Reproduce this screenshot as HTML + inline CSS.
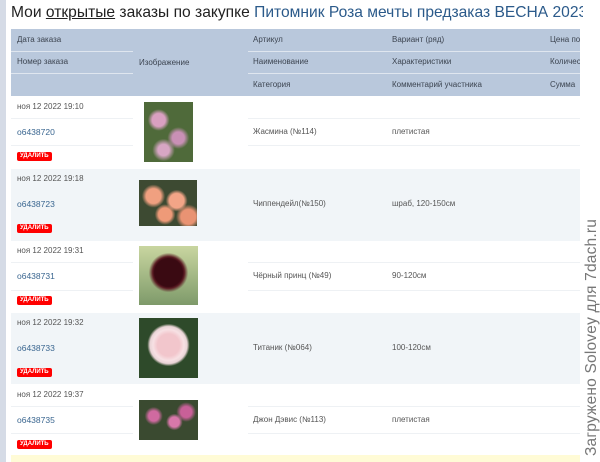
<!DOCTYPE html>
<html><head><meta charset="utf-8"><style>
*{margin:0;padding:0;box-sizing:border-box}
body{width:600px;height:462px;overflow:hidden;background:#fff;font-family:"Liberation Sans",Arial,sans-serif;position:relative}
.a{position:absolute;white-space:nowrap}
.strip{left:0;top:0;width:6px;height:462px;background:#d5dbe6}
h1{position:absolute;left:11px;top:4px;width:572px;overflow:hidden;font-weight:normal;font-size:15.6px;color:#222;white-space:nowrap}
h1 u{color:#222}
h1 span{color:#2b5a8a}
.hd{left:11px;top:29px;width:569px;height:67px;background:#b9c8dc}
.hl{position:absolute;height:1px;background:#dfe6ef}
.h{font-size:8px;color:#3c4450}
.row{left:11px;width:569px}
.t{font-size:8px;color:#555}
.n{font-size:8.5px;color:#3a6690}
.del{position:absolute;background:#f00;color:#fff;font-size:6px;font-weight:bold;border-radius:2px;padding:1px 3px;height:9px;line-height:7px}
.sep{position:absolute;height:1px;background:#eef1f4}
.img{position:absolute}
.wm{left:583px;top:456px;transform-origin:0 0;transform:rotate(-90deg);font-size:15.5px;color:#777;letter-spacing:0.2px}
</style></head><body>
<div class="a strip"></div>
<h1>Мои <u>открытые</u> заказы по закупке <span>Питомник Роза мечты предзаказ ВЕСНА 2023</span></h1>
<div class="a hd"></div>
<div class="hl" style="left:11px;top:51px;width:122px"></div>
<div class="hl" style="left:11px;top:73px;width:122px"></div>
<div class="hl" style="left:248px;top:51px;width:332px"></div>
<div class="hl" style="left:248px;top:73px;width:332px"></div>
<div class="a h" style="left:17px;top:35px">Дата заказа</div>
<div class="a h" style="left:17px;top:57px">Номер заказа</div>
<div class="a h" style="left:139px;top:58px">Изображение</div>
<div class="a h" style="left:253px;top:35px">Артикул</div>
<div class="a h" style="left:253px;top:57px">Наименование</div>
<div class="a h" style="left:253px;top:80px">Категория</div>
<div class="a h" style="left:392px;top:35px">Вариант (ряд)</div>
<div class="a h" style="left:392px;top:57px">Характеристики</div>
<div class="a h" style="left:392px;top:80px">Комментарий участника</div>
<div class="a h" style="left:550px;top:35px;width:30px;overflow:hidden">Цена по</div>
<div class="a h" style="left:550px;top:57px;width:30px;overflow:hidden">Количес</div>
<div class="a h" style="left:550px;top:80px">Сумма</div>

<div class="a row" style="top:169px;height:72px;background:#f1f5f8"></div>
<div class="a row" style="top:313px;height:71px;background:#f1f5f8"></div>
<div class="a" style="left:11px;top:455px;width:569px;height:7px;background:#fffbd6"></div>

<div class="sep" style="left:11px;top:118px;width:122px"></div><div class="sep" style="left:11px;top:145px;width:122px"></div>
<div class="sep" style="left:248px;top:118px;width:332px"></div><div class="sep" style="left:248px;top:145px;width:332px"></div>
<div class="sep" style="left:11px;top:262px;width:122px"></div><div class="sep" style="left:11px;top:290px;width:122px"></div>
<div class="sep" style="left:248px;top:262px;width:332px"></div><div class="sep" style="left:248px;top:290px;width:332px"></div>
<div class="sep" style="left:11px;top:406px;width:122px"></div><div class="sep" style="left:11px;top:433px;width:122px"></div>
<div class="sep" style="left:248px;top:406px;width:332px"></div><div class="sep" style="left:248px;top:433px;width:332px"></div>

<div class="a t" style="left:17px;top:102px">ноя 12 2022 19:10</div>
<div class="a n" style="left:17px;top:127px">о6438720</div>
<div class="del" style="left:17px;top:152px">УДАЛИТЬ</div>
<div class="a t" style="left:253px;top:127px">Жасмина (№114)</div>
<div class="a t" style="left:392px;top:127px">плетистая</div>

<div class="a t" style="left:17px;top:174px">ноя 12 2022 19:18</div>
<div class="a n" style="left:17px;top:199px">о6438723</div>
<div class="del" style="left:17px;top:224px">УДАЛИТЬ</div>
<div class="a t" style="left:253px;top:199px">Чиппендейл(№150)</div>
<div class="a t" style="left:392px;top:199px">шраб, 120-150см</div>

<div class="a t" style="left:17px;top:246px">ноя 12 2022 19:31</div>
<div class="a n" style="left:17px;top:271px">о6438731</div>
<div class="del" style="left:17px;top:296px">УДАЛИТЬ</div>
<div class="a t" style="left:253px;top:271px">Чёрный принц (№49)</div>
<div class="a t" style="left:392px;top:271px">90-120см</div>

<div class="a t" style="left:17px;top:318px">ноя 12 2022 19:32</div>
<div class="a n" style="left:17px;top:343px">о6438733</div>
<div class="del" style="left:17px;top:368px">УДАЛИТЬ</div>
<div class="a t" style="left:253px;top:343px">Титаник (№064)</div>
<div class="a t" style="left:392px;top:343px">100-120см</div>

<div class="a t" style="left:17px;top:390px">ноя 12 2022 19:37</div>
<div class="a n" style="left:17px;top:415px">о6438735</div>
<div class="del" style="left:17px;top:440px">УДАЛИТЬ</div>
<div class="a t" style="left:253px;top:415px">Джон Дэвис (№113)</div>
<div class="a t" style="left:392px;top:415px">плетистая</div>

<div class="img" style="left:144px;top:102px;width:49px;height:60px;background:radial-gradient(circle at 30% 30%,#d9a0c0 0 12%,transparent 20%),radial-gradient(circle at 70% 60%,#c990b5 0 12%,transparent 22%),radial-gradient(circle at 40% 80%,#d7a6c4 0 10%,transparent 20%),#4f6a3a"></div>
<div class="img" style="left:139px;top:180px;width:58px;height:46px;background:radial-gradient(circle at 25% 35%,#f0a080 0 14%,transparent 22%),radial-gradient(circle at 65% 45%,#f3a587 0 16%,transparent 24%),radial-gradient(circle at 45% 75%,#ee9a78 0 14%,transparent 22%),radial-gradient(circle at 85% 80%,#e99373 0 12%,transparent 20%),#3d4a32"></div>
<div class="img" style="left:139px;top:246px;width:59px;height:59px;background:radial-gradient(circle at 50% 45%,#3a0a12 0 32%,#5a1a22 36%,transparent 45%),linear-gradient(#c9d6a0,#7e9a6a)"></div>
<div class="img" style="left:139px;top:318px;width:59px;height:60px;background:radial-gradient(circle at 50% 45%,#f2c6cc 0 25%,#f7e1e4 35%,#e9d4d6 42%,transparent 48%),#2e4a2a"></div>
<div class="img" style="left:139px;top:400px;width:59px;height:40px;background:radial-gradient(circle at 25% 40%,#d06aa0 0 10%,transparent 18%),radial-gradient(circle at 60% 55%,#d878aa 0 12%,transparent 20%),radial-gradient(circle at 80% 30%,#c86098 0 10%,transparent 18%),#3a4a30"></div>

<div class="a wm">Загружено Solovey для 7dach.ru</div>
</body></html>
